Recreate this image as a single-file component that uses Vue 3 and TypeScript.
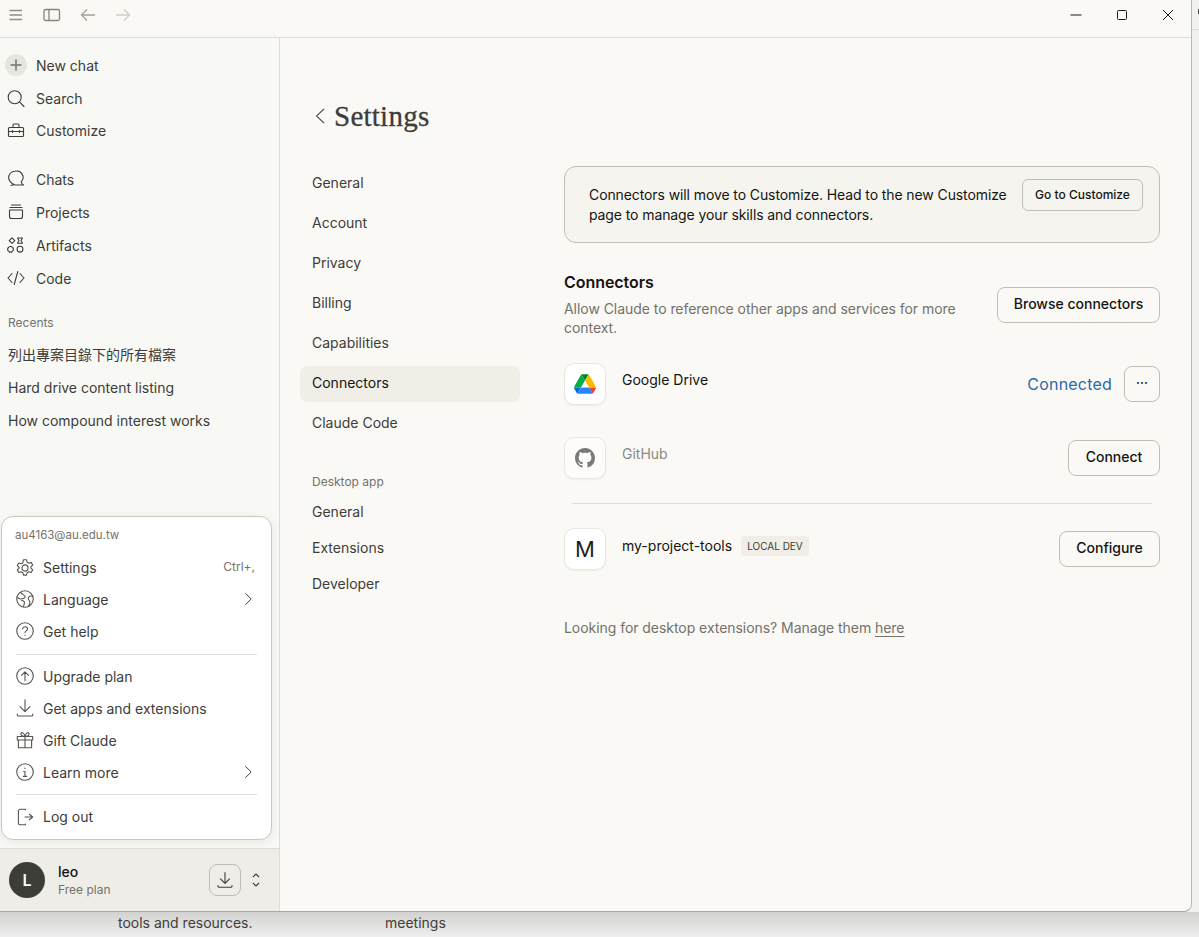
<script setup lang="ts">
interface Row { label: string; icon: string }
const icons: Record<string, string> = {
  search: 'M8.700 2.800a6.500 6.500 0 1 0 0 13 6.500 6.500 0 0 0 0-13ZM13.500 13.800 18 18.500',
  custom: 'M3.500 7.500h13a1 1 0 0 1 1 1v7a1 1 0 0 1-1 1h-13a1 1 0 0 1-1-1v-7a1 1 0 0 1 1-1ZM7 7.500V5a1 1 0 0 1 1-1h4a1 1 0 0 1 1 1v2.500M2.500 11.500h15M6.500 10.500v2M13.500 10.500v2',
  chats: 'M9 2.300a6.300 6.300 0 0 0-5 10.100c1 1.300 2.500 2.900 5 3.600h8.500c-1.200-.6-2-1.800-2.300-3.200A6.300 6.300 0 0 0 9 2.300ZM5 16.500c1-.2 2-.5 3-1',
  projects: 'M5.500 3h9M4 5.500h12M3.500 8h13v6.500a2 2 0 0 1-2 2h-9a2 2 0 0 1-2-2Z',
  artifacts: 'M6 2.800 8.800 5.600 6 8.400 3.200 5.600ZM11.500 3h5l-1.500 2.600 1.500 2.600h-5l1.500-2.600ZM3.500 11.500h2l.8 1 1 .8v2l-1 .8-.8 1h-2l-.8-1-1-.8v-2l1-.8ZM14 11.300a2.900 2.900 0 1 0 0 5.800 2.900 2.900 0 0 0 0-5.800Z',
  code: 'M6 5.500 2 10l4 4.500M14 5.500l4 4.500-4 4.500M11.800 3.500 8.200 16.500',
  gear: 'M10 7.200a2.800 2.800 0 1 0 0 5.600 2.800 2.800 0 0 0 0-5.600ZM8.600 2.500h2.800l.5 2.200 1.600.9 2.100-.7 1.400 2.400-1.600 1.500v1.400l1.600 1.500-1.400 2.400-2.100-.7-1.600.9-.5 2.200H8.600l-.5-2.200-1.600-.9-2.100.7-1.400-2.400 1.600-1.500V9.300L3 7.800l1.400-2.400 2.100.7 1.600-.9Z',
  globe: 'M10 2.500a7.500 7.500 0 1 0 0 15 7.500 7.500 0 0 0 0-15ZM6 3.800C7 6 9.500 6 10 7.500S8 10 6.500 10 3 8.500 2.700 8.500M17 7.500c-2-.5-3.500 0-4 1.500s1.500 2.500 1.500 4-1 3-1.500 3.500M7 11.500c1-.3 2.500.5 2.500 2s-1 2-.8 3.800',
  help: 'M10 2.500a7.500 7.500 0 1 0 0 15 7.500 7.500 0 0 0 0-15ZM7.800 8c.2-1.200 1.100-1.900 2.300-1.900s2.200.8 2.200 2c0 1.800-2.300 1.800-2.300 3.500M10 13.800v.2',
  up: 'M10 2.500a7.500 7.500 0 1 0 0 15 7.500 7.500 0 0 0 0-15ZM10 14V6.500M6.800 9.500 10 6.300l3.200 3.200',
  down: 'M10 2.500V13M5.500 8.800 10 13.300l4.500-4.500M3 15.500v.8a1 1 0 0 0 1 1h12a1 1 0 0 0 1-1v-.8',
  gift: 'M3 6.800h14v3.200H3ZM4 10v7h12v-7M10 6.800V17M10 6.800C8 6.800 6 5.800 6.300 4.200 6.600 2.800 9 2.500 10 6.800ZM10 6.800c2 0 4-1 3.700-2.600C13.400 2.800 11 2.500 10 6.800Z',
  info: 'M10 2.500a7.500 7.500 0 1 0 0 15 7.500 7.500 0 0 0 0-15ZM8.800 9.500H10v4.500M8.500 14h3M10 6.500v.3',
  logout: 'M10.500 3.500V3H5.500A1.500 1.500 0 0 0 4 4.500v11A1.500 1.500 0 0 0 5.500 17h5v-.5M10 10h7M14 7.500l3 2.500-3 2.500',
}
const topNav: Row[] = [
  { label: 'Search', icon: icons.search },
  { label: 'Customize', icon: icons.custom },
]
const midNav: Row[] = [
  { label: 'Chats', icon: icons.chats },
  { label: 'Projects', icon: icons.projects },
  { label: 'Artifacts', icon: icons.artifacts },
  { label: 'Code', icon: icons.code },
]
const recents = ['列出專案目錄下的所有檔案', 'Hard drive content listing', 'How compound interest works']
const chevron = 'M7.500 4 13.500 10l-6 6'
const menuA = [
  { label: 'Settings', icon: icons.gear, shortcut: 'Ctrl+,' },
  { label: 'Language', icon: icons.globe, more: true },
  { label: 'Get help', icon: icons.help },
]
const menuB = [
  { label: 'Upgrade plan', icon: icons.up },
  { label: 'Get apps and extensions', icon: icons.down },
  { label: 'Gift Claude', icon: icons.gift },
  { label: 'Learn more', icon: icons.info, more: true },
]
const settingsNav = ['General', 'Account', 'Privacy', 'Billing', 'Capabilities', 'Connectors', 'Claude Code']
const desktopNav = ['General', 'Extensions', 'Developer']
</script>

<template>
  <div class="screen">
    <div class="upper">
      <div class="window">
        <header class="titlebar">
          <div class="tb-left">
            <svg class="tb-ic burger" viewBox="0 0 16 16" width="16" height="16"><path d="M1.500 3.500h12.500M1.500 8h12.500M1.500 12.500h12.500" /></svg>
            <svg class="tb-ic panel" viewBox="0 0 18 14" width="18" height="14"><rect x="1" y="1.500" width="15.500" height="11" rx="1.500" /><path d="M6 1.500v11" /></svg>
            <svg class="tb-ic arrow" viewBox="0 0 16 14" width="16" height="14"><path d="M15 7H1.500M7 1.500 1.500 7 7 12.500" /></svg>
            <svg class="tb-ic arrow dim" viewBox="0 0 16 14" width="16" height="14"><path d="M1 7h13.500M9 1.500 14.500 7 9 12.500" /></svg>
          </div>
          <div class="tb-right">
            <svg viewBox="0 0 12 12" width="12" height="12"><path d="M0.500 6h11" /></svg>
            <svg viewBox="0 0 12 12" width="12" height="12"><rect x="1.500" y="1.500" width="9" height="9" rx="1" /></svg>
            <svg viewBox="0 0 12 12" width="12" height="12"><path d="M1 1 11 11M11 1 1 11" /></svg>
          </div>
        </header>

        <div class="body">
          <aside class="sidebar">
            <nav class="nav-block first">
              <div class="nav-row">
                <span class="plus"><svg viewBox="0 0 14 14" width="14" height="14"><path d="M7 1.500v11M1.500 7h11" /></svg></span>
                <span>New chat</span>
              </div>
              <div v-for="r in topNav" :key="r.label" class="nav-row">
                <svg class="ic" viewBox="0 0 20 20" width="20" height="20"><path :d="r.icon" /></svg>
                <span>{{ r.label }}</span>
              </div>
            </nav>
            <nav class="nav-block second">
              <div v-for="r in midNav" :key="r.label" class="nav-row">
                <svg class="ic" viewBox="0 0 20 20" width="20" height="20"><path :d="r.icon" /></svg>
                <span>{{ r.label }}</span>
              </div>
            </nav>
            <div class="recents-title">Recents</div>
            <div v-for="t in recents" :key="t" class="recent">{{ t }}</div>

            <div class="menu">
              <div class="email">au4163@au.edu.tw</div>
              <div v-for="m in menuA" :key="m.label" class="menu-row">
                <svg class="ic" viewBox="0 0 20 20" width="22" height="22"><path :d="m.icon" /></svg>
                <span class="grow">{{ m.label }}</span>
                <span v-if="m.shortcut" class="shortcut">{{ m.shortcut }}</span>
                <svg v-if="m.more" class="ic chev" viewBox="0 0 20 20" width="18" height="18"><path :d="chevron" /></svg>
              </div>
              <div class="menu-sep upper-sep"></div>
              <div v-for="m in menuB" :key="m.label" class="menu-row">
                <svg class="ic" viewBox="0 0 20 20" width="22" height="22"><path :d="m.icon" /></svg>
                <span class="grow">{{ m.label }}</span>
                <svg v-if="m.more" class="ic chev" viewBox="0 0 20 20" width="18" height="18"><path :d="chevron" /></svg>
              </div>
              <div class="menu-sep"></div>
              <div class="menu-row">
                <svg class="ic" viewBox="0 0 20 20" width="22" height="22"><path :d="icons.logout" /></svg>
                <span class="grow">Log out</span>
              </div>
            </div>

            <footer class="user">
              <div class="avatar">L</div>
              <div class="user-text">
                <div class="user-name">leo</div>
                <div class="user-plan">Free plan</div>
              </div>
              <button class="dl"><svg class="ic" viewBox="0 0 20 20" width="20" height="20"><path :d="icons.down" /></svg></button>
              <svg class="updown" viewBox="0 0 10 16" width="10" height="16"><path d="M2 5 5 2l3 3M2 11l3 3 3-3" /></svg>
            </footer>
          </aside>

          <main class="main">
            <div class="page-head">
              <svg class="back" viewBox="0 0 10 16" width="10" height="16"><path d="M9 1 1.500 8 9 15" /></svg>
              <h1>Settings</h1>
            </div>
            <div class="columns">
              <nav class="settings-nav">
                <div v-for="s in settingsNav" :key="s" class="s-row" :class="{ active: s === 'Connectors' }">{{ s }}</div>
                <div class="s-group">Desktop app</div>
                <div v-for="s in desktopNav" :key="'d' + s" class="s-row tight">{{ s }}</div>
              </nav>
              <section class="content">
                <div class="banner">
                  <p>Connectors will move to Customize. Head to the new Customize page to manage your skills and connectors.</p>
                  <button class="btn small">Go to Customize</button>
                </div>
                <div class="conn-head">
                  <div class="conn-text">
                    <h2>Connectors</h2>
                    <p>Allow Claude to reference other apps and services for more context.</p>
                  </div>
                  <button class="btn browse">Browse connectors</button>
                </div>
                <div class="conn gdrive">
                  <div class="tile">
                    <svg viewBox="0 0 87.300 78" width="22" height="20">
                      <path d="m6.600 66.850 3.850 6.650c.8 1.400 1.950 2.500 3.300 3.300l13.750-23.800h-27.500c0 1.550.4 3.100 1.200 4.500z" fill="#0066da" />
                      <path d="m43.650 25-13.750-23.800c-1.350.8-2.500 1.900-3.300 3.300l-25.400 44a9.060 9.060 0 0 0 -1.200 4.500h27.500z" fill="#00ac47" />
                      <path d="m73.550 76.800c1.350-.8 2.500-1.900 3.300-3.300l1.600-2.750 7.650-13.250c.8-1.400 1.200-2.950 1.200-4.500h-27.502l5.852 11.500z" fill="#ea4335" />
                      <path d="m43.650 25 13.750-23.800c-1.350-.8-2.900-1.200-4.500-1.200h-18.500c-1.600 0-3.150.45-4.500 1.200z" fill="#00832d" />
                      <path d="m59.800 53h-32.300l-13.750 23.800c1.350.8 2.900 1.200 4.500 1.200h50.800c1.600 0 3.150-.45 4.500-1.200z" fill="#2684fc" />
                      <path d="m73.400 26.500-12.700-22c-.8-1.400-1.950-2.500-3.300-3.300l-13.750 23.800 16.150 28h27.450c0-1.550-.4-3.100-1.200-4.500z" fill="#ffba00" />
                    </svg>
                  </div>
                  <div class="conn-name">Google Drive</div>
                  <span class="connected">Connected</span>
                  <button class="btn more">···</button>
                </div>
                <div class="conn github">
                  <div class="tile faded">
                    <svg viewBox="0 0 16 16" width="20" height="20"><path fill="#7a7a76" d="M8 0C3.580 0 0 3.580 0 8c0 3.540 2.290 6.530 5.470 7.590.4.070.55-.17.55-.38 0-.19-.01-.82-.01-1.490-2.010.37-2.530-.49-2.690-.94-.09-.23-.48-.94-.82-1.130-.28-.15-.68-.52-.01-.53.63-.01 1.080.58 1.230.82.72 1.210 1.870.87 2.330.66.07-.52.28-.87.51-1.070-1.780-.2-3.640-.89-3.640-3.950 0-.87.31-1.590.82-2.150-.08-.2-.36-1.020.08-2.120 0 0 .67-.21 2.200.82.64-.18 1.320-.27 2-.27s1.360.09 2 .27c1.530-1.040 2.200-.82 2.200-.82.44 1.100.16 1.920.08 2.120.51.56.82 1.270.82 2.150 0 3.070-1.870 3.750-3.650 3.950.29.25.54.73.54 1.480 0 1.070-.01 1.930-.01 2.200 0 .21.15.46.55.38A8.010 8.010 0 0 0 16 8c0-4.420-3.580-8-8-8z" /></svg>
                  </div>
                  <div class="conn-name muted">GitHub</div>
                  <button class="btn connect">Connect</button>
                </div>
                <div class="conn-sep"></div>
                <div class="conn mine">
                  <div class="tile letter">M</div>
                  <div class="conn-name">my-project-tools<span class="badge">LOCAL DEV</span></div>
                  <button class="btn configure">Configure</button>
                </div>
                <p class="hint">Looking for desktop extensions? Manage them <span class="link">here</span></p>
              </section>
            </div>
          </main>
        </div>
      </div>
      <div class="strip"><span class="mark"></span><span class="strip-line"></span></div>
    </div>
    <div class="behind">
      <span class="b1">tools and resources.</span>
      <span class="b2">meetings</span>
    </div>
  </div>
</template>

<style>
html, body { margin: 0; padding: 0; overflow: hidden; }
</style>

<style scoped>
* { box-sizing: border-box; }
.screen {
  width: 1199px; height: 937px; overflow: hidden; display: flex; flex-direction: column;
  background: #efefee;
  font-family: Inter, "Noto Sans CJK TC", sans-serif;
  font-size: 14px; color: #3d3d3a;
}
.upper { display: flex; height: 912px; flex: none; }
.window {
  width: 1192px; height: 912px; display: flex; flex-direction: column; flex: none;
  background: #faf9f5; border-right: 1px solid #b8b8b4; border-bottom: 1px solid #a9a9a5;
  border-bottom-right-radius: 8px; overflow: hidden;
}
.strip { flex: 1; position: relative; background: #f1f1f0; }
.mark { position: absolute; right: 0; top: 9px; width: 1px; height: 5px; background: #444; }
.strip-line { position: absolute; left: 0; right: 0; top: 29px; height: 1px; background: #dcdcda; }
.titlebar {
  height: 38px; flex: none; display: flex; justify-content: space-between; align-items: center;
  border-bottom: 1px solid #dedcd6; background: #faf9f5; padding-bottom: 7px;
}
.titlebar svg { fill: none; stroke: #73726c; stroke-width: 1.300; }
.tb-left { display: flex; align-items: center; padding-left: 8px; gap: 19px; }
.titlebar .burger { stroke: #8f8f89; stroke-width: 1.600; }
.titlebar .panel { stroke: #85847e; }
.titlebar .arrow { stroke: #a3a29c; }
.titlebar .arrow.dim { stroke: #d0cfca; }
.tb-right { display: flex; gap: 34px; padding-right: 17px; }
.tb-right svg { stroke: #1a1a1a; stroke-width: 1; }
.body { flex: 1; display: flex; min-height: 0; }

.sidebar {
  width: 280px; flex: none; position: relative; display: flex; flex-direction: column;
  background: #f8f8f4; border-right: 1px solid #dedcd6;
}
.nav-block { display: flex; flex-direction: column; }
.nav-block.first { padding-top: 10.500px; }
.nav-block.first .nav-row:last-child { margin-top: -1px; }
.nav-block.second { padding-top: 16px; }
.nav-row { height: 33px; display: flex; align-items: center; gap: 10px; padding-left: 6px; }
.ic { fill: none; stroke: #3d3d3a; stroke-width: 1.100; flex: none; stroke-linecap: round; stroke-linejoin: round; }
.plus {
  width: 22px; height: 22px; margin-left: -1px; margin-right: -1px; border-radius: 50%; background: #e6e5e0;
  display: flex; align-items: center; justify-content: center;
}
.plus svg { fill: none; stroke: #73726c; stroke-width: 1.500; }
.recents-title { margin-top: 16px; margin-bottom: 3.500px; height: 24px; line-height: 24px; padding-left: 8px; font-size: 12px; color: #73726c; }
.recent { height: 33px; line-height: 33px; padding-left: 8px; }

.menu {
  position: absolute; left: 1px; top: 478px; width: 271px; height: 324px;
  background: #fff; border: 1px solid #c9c8c2; border-radius: 12px;
  box-shadow: 0 2px 10px rgba(0,0,0,.07); padding: 6px 14px 0;
}
.email { height: 24px; line-height: 24px; font-size: 11.500px; color: #73726c; margin: 0 0 4px -1px; }
.menu-row { height: 32px; display: flex; align-items: center; gap: 7px; }
.email + .menu-row { padding-top: 1px; }
.menu-row > .ic:first-child { margin-left: -2px; stroke: #55544f; stroke-width: 1; }
.grow { flex: 1; }
.shortcut { font-size: 12px; color: #73726c; margin: -3px 2px 0 0; }
.chev { stroke: #3d3d3a; }
.menu-sep { height: 1px; background: #dedcd6; margin: 6px 0 5.500px; }
.menu-sep.upper-sep { margin: 7px 0 5px; }

.user {
  position: absolute; left: 0; right: 0; bottom: 0; height: 63px;
  background: #efede7; border-top: 1px solid #dedcd6;
  display: flex; align-items: center; padding-left: 9px;
}
.avatar {
  width: 36px; height: 36px; border-radius: 50%; background: #3d3d37; color: #fff;
  display: flex; align-items: center; justify-content: center; font-weight: 600; font-size: 16px;
}
.user-text { margin-left: 13px; flex: 1; }
.user-name { font-size: 14px; font-weight: 500; color: #141413; line-height: 18px; }
.user-plan { font-size: 12px; color: #73726c; line-height: 17px; }
.dl {
  width: 32px; height: 32px; border: 1px solid #bdbcb6; border-radius: 8px; background: transparent;
  display: flex; align-items: center; justify-content: center; padding: 0; margin-right: 10px;
}
.updown { fill: none; stroke: #3d3d3a; stroke-width: 1.100; margin-right: 18px; }

.main { flex: 1; min-width: 0; padding: 60px 0 0 20px; }
.page-head { display: flex; align-items: center; height: 36px; padding-left: 15px; gap: 9px; }
.back { fill: none; stroke: #55544f; stroke-width: 1.100; }
h1 { margin: 0; font-family: "Liberation Serif", serif; font-size: 29px; font-weight: 400; letter-spacing: .25px; color: #3d3d3a; -webkit-text-stroke: .3px #3d3d3a; }
.columns { display: flex; margin-top: 32px; }
.settings-nav { width: 220px; flex: none; margin-right: 44px; }
.s-row { height: 36px; line-height: 34px; padding-left: 12px; margin-bottom: 4px; border-radius: 8px; }
.s-row.active { background: #f0eee6; color: #141413; }
.s-row.tight { margin-bottom: 0; line-height: 36px; }
.s-group { font-size: 12px; color: #73726c; padding-left: 12px; margin-top: 28px; height: 24px; line-height: 24px; }
.content { width: 596px; flex: none; }
.banner {
  height: 77px; border: 1px solid #bfbeb8; border-radius: 12px; background: #f5f4ee;
  display: flex; align-items: flex-start; padding: 12px 16px 0 24px; gap: 8px; color: #141413;
}
.banner p { margin: 6px 0 0; line-height: 20px; flex: 1; letter-spacing: -.1px; }
.btn {
  height: 36px; padding: 0 0 4px; background: transparent; border: 1px solid #bfbeb8; border-radius: 8px;
  font: 500 14px Inter, sans-serif; color: #141413; flex: none; white-space: nowrap;
}
.btn.small { width: 121px; height: 32px; padding-bottom: 2px; font-size: 12px; border-radius: 6px; }
.btn.browse { width: 163px; margin-top: 15px; }
.btn.connect { width: 92px; }
.btn.configure { width: 101px; }
.conn-head { display: flex; justify-content: space-between; align-items: flex-start; margin-top: 29px; height: 61px; }
.conn-text { width: 410px; letter-spacing: -.05px; }
h2 { margin: 0 0 7px; font-size: 16px; font-weight: 600; color: #141413; line-height: 20px; }
.conn-text p { margin: 0; line-height: 19px; color: #73726c; }
.conn { display: flex; align-items: center; }
.gdrive { margin-top: 30px; }
.github { margin-top: 32px; }
.tile {
  width: 42px; height: 42px; flex: none; border-radius: 10px; background: #fff;
  border: 1px solid #e8e7e2; box-shadow: 0 1px 2px rgba(0,0,0,.05);
  display: flex; align-items: center; justify-content: center; margin-right: 16px;
}
.tile.faded { background: #fdfcfa; }
.tile.letter { font-size: 22px; font-weight: 400; color: #1f1f1e; }
.conn-name { flex: 1; color: #141413; align-self: flex-start; margin-top: 8px; line-height: 18px; display: flex; align-items: center; }
.conn-name.muted { color: #8a8984; }
.connected { color: #2c6aa8; font-size: 16px; letter-spacing: .2px; margin-right: 12px; }
.btn.more { width: 36px; font-size: 13px; }
.badge {
  margin-left: 9px; height: 20px; padding: 0 6px; background: #f0eee6; border-radius: 4px;
  font-size: 10px; line-height: 20px; color: #3d3d3a;
}
.conn-sep { height: 1px; background: #dedcd6; margin: 24px 8px; }
.hint { margin: 48px 0 0; color: #73726c; line-height: 20px; letter-spacing: -.05px; }
.link { text-decoration: underline; text-underline-offset: 3px; text-decoration-thickness: 1px; }

.behind { position: relative; flex: 1; background: linear-gradient(to bottom, #d2d2d1, #eeeeee); }
.b1, .b2 { position: absolute; top: 2px; color: #3d3d3a; line-height: 18px; }
.b1 { left: 118px; }
.b2 { left: 385px; }
</style>
